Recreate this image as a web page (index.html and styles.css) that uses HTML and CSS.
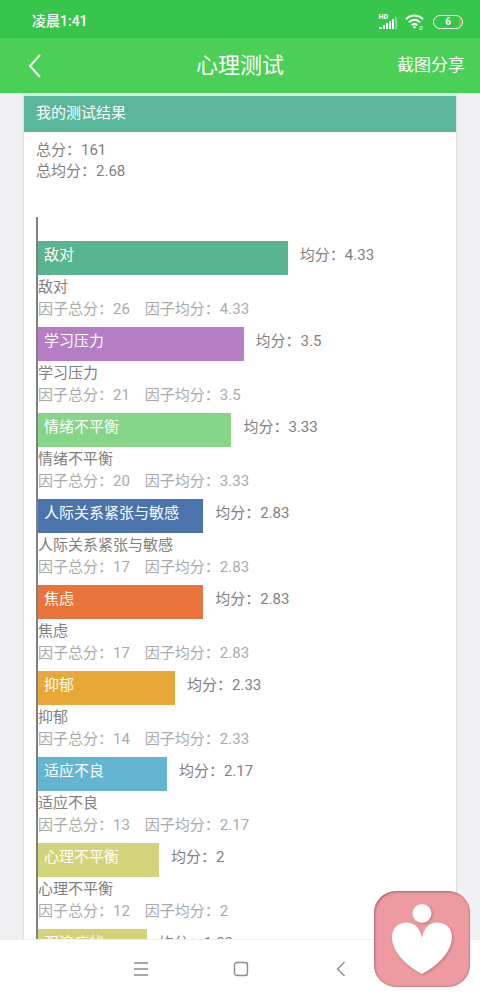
FILE: index.html
```html
<!DOCTYPE html>
<html lang="zh-CN">
<head>
  <meta charset="UTF-8" />
  <meta name="viewport" content="width=device-width, initial-scale=1" />
  <title>心理测试</title>
  <link rel="stylesheet" href="styles.css">
</head>
<body>
  <div class="status-bar">
    <span class="time">凌晨1:41</span>
    <div class="status-icons">
      <div class="signal">
        <span class="hd">HD</span>
        <svg width="18" height="12" viewBox="0 0 18 12" fill="#fff" aria-hidden="true">
          <rect x="0" y="10" width="3" height="2" />
          <rect x="4" y="8" width="2" height="4" />
          <rect x="7" y="6" width="2" height="6" />
          <rect x="10" y="4" width="2" height="8" />
          <rect x="13" y="2" width="2" height="10" />
          <rect x="16" y="0" width="2" height="12" opacity=".35" />
        </svg>
      </div>
      <svg width="20" height="16" viewBox="0 0 20 16" fill="none" stroke="#fff" stroke-width="2" aria-hidden="true">
        <path d="M1 5.2C6 .2 13 .2 18 5.2" />
        <path d="M4 8.3C7.3 5 11.700 5 15 8.3" />
        <path d="M6.8 11.2C8.5 9.5 10.5 9.5 12.2 11.2" />
        <circle cx="9.5" cy="13.2" r="1.2" fill="#fff" stroke="none" />
        <path d="M14.5 12.5h3v1.500h-3v1.500h3" stroke-width=".7" opacity=".8" />
      </svg>
      <span class="battery">6</span>
    </div>
  </div>

  <header>
    <button type="button" class="back" aria-label="返回">
      <svg width="14" height="24" viewBox="0 0 14 24" fill="none" stroke="#fff" stroke-width="2" aria-hidden="true">
        <path d="M13 1L3 12L13 23" />
      </svg>
    </button>
    <h1>心理测试</h1>
    <button type="button" class="share">截图分享</button>
  </header>

  <main>
    <section class="card">
      <h2>我的测试结果</h2>
      <div class="card-body">
        <p>总分：161</p>
        <p>总均分：2.68</p>

        <ul class="chart">
          <li>
            <div class="row"><div class="bar green" style="width: 62%">敌对</div><span>均分：4.33</span></div>
            <h3>敌对</h3>
            <p class="detail">因子总分：26　因子均分：4.33</p>
          </li>
          <li>
            <div class="row"><div class="bar purple" style="width: 51%">学习压力</div><span>均分：3.5</span></div>
            <h3>学习压力</h3>
            <p class="detail">因子总分：21　因子均分：3.5</p>
          </li>
          <li>
            <div class="row"><div class="bar lime" style="width: 48%">情绪不平衡</div><span>均分：3.33</span></div>
            <h3>情绪不平衡</h3>
            <p class="detail">因子总分：20　因子均分：3.33</p>
          </li>
          <li>
            <div class="row"><div class="bar blue" style="width: 41%">人际关系紧张与敏感</div><span>均分：2.83</span></div>
            <h3>人际关系紧张与敏感</h3>
            <p class="detail">因子总分：17　因子均分：2.83</p>
          </li>
          <li>
            <div class="row"><div class="bar orange" style="width: 41%">焦虑</div><span>均分：2.83</span></div>
            <h3>焦虑</h3>
            <p class="detail">因子总分：17　因子均分：2.83</p>
          </li>
          <li>
            <div class="row"><div class="bar amber" style="width: 34%">抑郁</div><span>均分：2.33</span></div>
            <h3>抑郁</h3>
            <p class="detail">因子总分：14　因子均分：2.33</p>
          </li>
          <li>
            <div class="row"><div class="bar sky" style="width: 32%">适应不良</div><span>均分：2.17</span></div>
            <h3>适应不良</h3>
            <p class="detail">因子总分：13　因子均分：2.17</p>
          </li>
          <li>
            <div class="row"><div class="bar olive" style="width: 30%">心理不平衡</div><span>均分：2</span></div>
            <h3>心理不平衡</h3>
            <p class="detail">因子总分：12　因子均分：2</p>
          </li>
          <li>
            <div class="row"><div class="bar olive" style="width: 27%">强迫症状</div><span>均分：1.83</span></div>
          </li>
        </ul>
      </div>
    </section>
  </main>

  <nav>
    <button type="button" aria-label="菜单">
      <svg width="16" height="16" viewBox="0 0 16 16" fill="none" stroke="#8c8c8c" stroke-width="1.3" aria-hidden="true">
        <path d="M1 2h14M1 8h14M1 14h14" />
      </svg>
    </button>
    <button type="button" aria-label="主页">
      <svg width="16" height="16" viewBox="0 0 16 16" fill="none" stroke="#8c8c8c" stroke-width="1.4" aria-hidden="true">
        <rect x="1.5" y="1.5" width="13" height="13" rx="2.5" />
      </svg>
    </button>
    <button type="button" aria-label="后退">
      <svg width="16" height="16" viewBox="0 0 16 16" fill="none" stroke="#8c8c8c" stroke-width="1.4" aria-hidden="true">
        <path d="M11.500 1L4.500 8L11.500 15" />
      </svg>
    </button>
  </nav>

  <button type="button" class="float-btn" aria-label="心理咨询">
    <svg width="96" height="96" viewBox="0 0 96 96" fill="#fff" aria-hidden="true">
      <circle cx="48" cy="22.5" r="9.5" />
      <path d="M48 47C47 38 41 31.500 33 31.500C24 31.500 18 37 18 46C18 60 31 74 48 83C65 74 78 60 78 46C78 37 72 31.500 63 31.500C55 31.500 49 38 48 47Z" />
    </svg>
  </button>
</body>
</html>
```
FILE: styles.css
```css
:root {
  --status: #38c54d;
  --header: #4ad056;
  --text: #808080;
  --muted: #aaa;
}
* { box-sizing: border-box; }
body {
  margin: 0; height: 100vh;
  display: flex; flex-direction: column;
  font-family: Roboto, "Noto Sans CJK SC", sans-serif;
  font-size: 15px; line-height: 21px;
  background: #f0f0f2; color: var(--text);
}
h1, h2, h3, p, ul { margin: 0; padding: 0; font-weight: normal; }
button {
  padding: 0; border: none; background: transparent;
  font: inherit; color: inherit; cursor: pointer;
}
svg { display: block; }

.status-bar {
  flex: none; height: 38px; padding: 5px 17px 0 32px;
  display: flex; align-items: center; justify-content: space-between;
  background: var(--status); color: #fff;
}
.time { font-size: 14px; font-weight: 500; }
.status-icons { display: flex; align-items: center; gap: 8px; }
.signal { display: flex; align-items: flex-end; height: 15px; }
.hd {
  align-self: flex-start; margin-right: -9px;
  font-size: 7px; line-height: 6px; font-weight: bold;
}
.battery {
  width: 30px; height: 14px; border: 1px solid #fff; border-radius: 7px;
  font-size: 10px; line-height: 12px; font-weight: bold; text-align: center;
  background: linear-gradient(#b7a82c, #b7a82c) right 1px center / 2px 8px no-repeat;
}

header {
  flex: none; height: 55px; padding: 0 15px 0 27px;
  display: grid; grid-template-columns: 1fr auto 1fr; align-items: center;
  background: var(--header); color: #fff;
}
header h1 { font-size: 22px; line-height: 30px; padding-right: 12px; }
.back { justify-self: start; }
.share { justify-self: end; font-size: 17px; }

main { flex: 1; min-height: 0; overflow: hidden; padding: 0 24px; }
.card {
  background: #fff; border-top: 3px solid #d5f3dc;
  box-shadow: 0 0 2px rgba(0,0,0,.2);
}
.card h2 {
  height: 36px; padding: 0 12px;
  font-size: 15px; line-height: 34px;
  background: #5bb79b; color: #fff;
}
.card-body { padding: 8px 15px 0 12px; }

.chart {
  margin-top: 35px; padding-top: 24px;
  border-left: 2px solid #808080; list-style: none;
}
.chart li { height: 86px; }
.row { display: flex; gap: 12px; line-height: 28px; }
.bar { height: 34px; padding-left: 6px; color: #fff; white-space: nowrap; }
.chart h3 { font-size: 15px; line-height: 24px; }
.detail { color: var(--muted); }

.green { background: #58b491; }
.purple { background: #b67dc4; }
.lime { background: #86d588; }
.blue { background: #4b74ad; }
.orange { background: #e9733d; }
.amber { background: #e8a838; }
.sky { background: #63b5d2; }
.olive { background: #d3d37c; }

nav {
  flex: none; height: 58px; padding: 0 89px 0 91px;
  display: flex; align-items: center; justify-content: space-around;
  background: #fff; border-top: 1px solid #f0f0f0;
}
nav button { padding: 8px; }

.float-btn {
  position: fixed; right: 10px; bottom: 10px;
  border-radius: 22px; background: #ed9aa0;
  box-shadow: inset 1px 1px 2px rgba(90,50,55,.5), inset -1px -1px 1px rgba(90,50,55,.2);
}
.float-btn svg { filter: drop-shadow(1px 1px 1px rgba(110,50,60,.4)); }
```
